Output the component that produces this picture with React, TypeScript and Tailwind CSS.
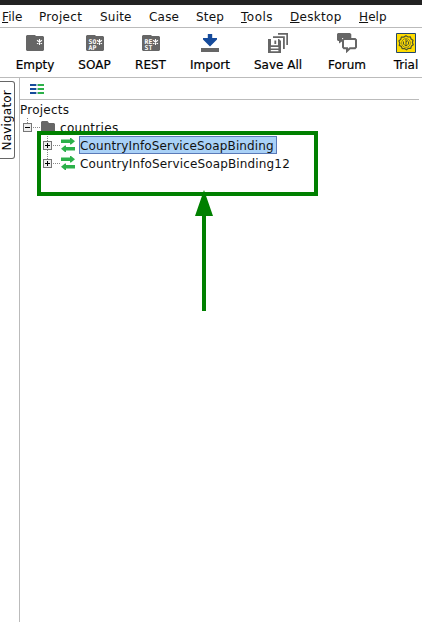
import type { ReactNode } from "react";

const menus = [
  { label: "File", key: true, width: "w-[37px]", space: "tracking-[0.1px]" },
  { label: "Project", key: false, width: "w-[61px]", space: "tracking-[0.3px]" },
  { label: "Suite", key: false, width: "w-[49px]", space: "tracking-[0.2px]" },
  { label: "Case", key: false, width: "w-[47px]", space: "tracking-[0.2px]" },
  { label: "Step", key: false, width: "w-[45px]", space: "tracking-[0.2px]" },
  { label: "Tools", key: true, width: "w-[49px]", space: "tracking-[0.5px]" },
  { label: "Desktop", key: true, width: "w-[69px]", space: "tracking-[0.3px]" },
  { label: "Help", key: true, width: "w-[40px]", space: "tracking-[0.1px]" },
];

function FileIcon({ top, bottom }: { top?: string; bottom?: string }) {
  return (
    <svg width="18" height="16" viewBox="0 0 18 16">
      <path d="M1 0H9L10 1H17L18 2V15L17 16H1L0 15V1Z" fill="#666" />
      <path d="M13.5 4V10M11 5.3L16 8.7M16 5.3L11 8.7" stroke="#fff" strokeWidth="1.1" />
      {top && (
        <text fill="#fff" fontFamily="DejaVu Sans Mono" fontSize="6.5" fontWeight="bold">
          <tspan x="2.5" y="9">{top}</tspan>
          <tspan x="2.5" y="15">{bottom}</tspan>
        </text>
      )}
    </svg>
  );
}

function ImportIcon() {
  return (
    <svg width="18" height="18" viewBox="0 0 18 18">
      <path d="M6.8 0H11.2V4H16V5.5L9 12.5L2 5.5V4H6.8Z" fill="#164b9b" />
      <path d="M0 14H18V18H0Z" fill="#666" />
    </svg>
  );
}

function SaveIcon() {
  return (
    <svg width="20" height="20" viewBox="0 0 20 20" fill="#666">
      <path d="M10 0H20V12H18.3V1.8H10Z" />
      <path d="M5 3.2H16.8V16H15V5H5Z" />
      <path fillRule="evenodd" d="M0 6H3V12.3H10V6H11L13 8V20H0ZM2.8 14V15.4H10.4V14ZM2.8 17V18.3H10.4V17Z" />
      <path d="M6.4 7.5H8.2V11H6.4Z" />
    </svg>
  );
}

function ForumIcon() {
  return (
    <svg width="20" height="20" viewBox="0 0 20 20">
      <path d="M1 0H13L14.3 1.2V5H5V8.5L2 10.5V8H1L0 7V1Z" fill="#666" />
      <path d="M7 6H18L19 7V14.2L18 15.2H13L10 18V15.2H7L6 14.2V7Z" fill="#fff" stroke="#666" strokeWidth="2" />
    </svg>
  );
}

function TrialIcon() {
  return (
    <svg width="20" height="20" viewBox="0 0 20 20" fill="none" stroke="#4a5330">
      <path d="M.5.5H19.5V19.5H.5Z" fill="#ffdc00" stroke="#23466b" />
      <path d="M10 2.8L12 4L14.3 3.8L15.1 6L17 7.2L16.4 9.5L17.2 11.7L15.4 13L14.7 15.3L12.4 15.3L10.5 16.8L8.5 15.5L6.2 15.6L5.3 13.5L3.3 12.4L3.8 10L2.9 7.9L4.7 6.4L5.4 4.1L7.8 4.1Z" strokeWidth="1.2" />
      <circle cx="10" cy="10" r="4.4" strokeWidth="0.6" />
      <path d="M10 6V12.5M7.5 8.5V11L9 12.5H11L12.5 11V8.5M10 9L12 7.5" strokeWidth="1" />
    </svg>
  );
}

const tools: { label: string; width: string; icon: ReactNode; pad: string }[] = [
  { label: "Empty", width: "w-[60px]", icon: <FileIcon />, pad: "pt-[7px]" },
  { label: "SOAP", width: "w-[59px]", icon: <FileIcon top="SO" bottom="AP" />, pad: "pt-[7px]" },
  { label: "REST", width: "w-[53px]", icon: <FileIcon top="RE" bottom="ST" />, pad: "pt-[7px]" },
  { label: "Import", width: "w-[66px]", icon: <ImportIcon />, pad: "pt-[6px]" },
  { label: "Save All", width: "w-[70px]", icon: <SaveIcon />, pad: "pt-[5px]" },
  { label: "Forum", width: "w-[68px]", icon: <ForumIcon />, pad: "pt-[5px]" },
  { label: "Trial", width: "w-[50px]", icon: <TrialIcon />, pad: "pt-[5px]" },
];

function Toggle({ open = false, last = false }: { open?: boolean; last?: boolean }) {
  return (
    <svg width="17" height="18" viewBox="0 0 17 18" className="shrink-0" shapeRendering="crispEdges">
      <path d={last || open ? "M4.5 0V5" : "M4.5 0V18"} stroke="#888" strokeDasharray="1 1" />
      <path d="M10 9.5H17" stroke="#888" strokeDasharray="1 1" />
      <path d="M.5 5.5H8.5V13.5H.5Z" fill="#eee" stroke="#777" />
      <path d={open ? "M2 9.5H7" : "M2 9.5H7M4.5 7V12"} stroke="#000" />
    </svg>
  );
}

function BindingIcon() {
  return (
    <svg width="14" height="14" viewBox="0 0 14 14" fill="#2cb14a" className="ml-[1px] shrink-0">
      <path d="M0 1.5H9V0H10L14 3.2L10 6.6H9V5H0Z" />
      <path d="M14 9H5V7.4H4L0 10.7L4 14H5V12.5H14Z" />
    </svg>
  );
}

export default function App() {
  return (
    <div className="relative flex h-[622px] w-[422px] flex-col overflow-hidden bg-white font-['DejaVu_Sans',sans-serif] text-[12px] text-[#111]">
      <div className="h-[5px] shrink-0 bg-[#222]" />
      <nav className="flex h-[23px] shrink-0 border-b border-[#bbb] pl-[2px] leading-[24px]">
        {menus.map((m) => (
          <span key={m.label} className={`${m.width} ${m.space} shrink-0 whitespace-nowrap`}>
            {m.key ? <span className="underline decoration-1 underline-offset-[1px]">{m.label[0]}</span> : m.label[0]}
            {m.label.slice(1)}
          </span>
        ))}
      </nav>
      <div className="flex h-[50px] shrink-0 overflow-hidden border-b border-[#bbb] pl-[5px] text-black">
        {tools.map((t) => (
          <div key={t.label} className={`${t.width} flex shrink-0 flex-col items-center`}>
            <div className={`h-[28px] ${t.pad}`}>{t.icon}</div>
            <span className="whitespace-nowrap leading-[18px] [-webkit-text-stroke:0.2px_black]">{t.label}</span>
          </div>
        ))}
      </div>
      <div className="flex min-h-0 flex-1">
        <aside className="w-[19px] shrink-0 pt-[3px]">
          <div className="flex h-[78px] w-[15px] items-center justify-center rounded-r-[3px] border border-l-0 border-[#666]">
            <span className="rotate-180 leading-[14px] tracking-[0.2px] text-black [writing-mode:vertical-rl]">Navigator</span>
          </div>
        </aside>
        <main className="flex-1 border-l border-[#bbb]">
          <div className="mr-[3px] flex h-[22px] items-start border-b border-[#bbb] pl-[10px] pt-[6px]">
            <svg width="14" height="10" viewBox="0 0 14 10" shapeRendering="crispEdges">
              <path d="M0 1H6M0 5H6M0 9H6" stroke="#164b9b" strokeWidth="2" />
              <path d="M8 1H14M8 5H14M8 9H14" stroke="#2cb14a" strokeWidth="2" />
              <path d="M6 1H8M6 5H8M6 9H8" stroke="#a3c3cc" strokeWidth="2" />
            </svg>
          </div>
          <div className="h-[18px] leading-[20px] tracking-[0.25px]">Projects</div>
          <div className="flex h-[18px] items-center pl-[3px]">
            <Toggle open />
            <svg width="14" height="14" viewBox="0 0 14 14" className="ml-[1px]">
              <path d="M1 1H6.5L8 3H13L14 4V14H0V2Z" fill="#666" />
            </svg>
            <span className="ml-[5px] pt-[2px] leading-[18px] tracking-[0.3px]">countries</span>
          </div>
          <div className="flex h-[18px] items-center pl-[23px]">
            <Toggle />
            <BindingIcon />
            <span className="ml-[4px] flex h-[18px] w-[198px] items-center whitespace-nowrap border border-[#5a7ab8] bg-[#a9d1f7] pt-[2px] tracking-[0.13px]">CountryInfoServiceSoapBinding</span>
          </div>
          <div className="flex h-[18px] items-center pl-[23px]">
            <Toggle last />
            <BindingIcon />
            <span className="ml-[5px] whitespace-nowrap pt-[2px] tracking-[0.15px]">CountryInfoServiceSoapBinding12</span>
          </div>
        </main>
      </div>
      <div className="absolute left-[37px] top-[131px] h-[65px] w-[281px] border-4 border-[#008000]" />
      <svg className="absolute left-[195px] top-[190px]" width="18" height="121" viewBox="0 0 18 121" fill="#008000">
        <path d="M9 0L18 26H11V121H7V26H0Z" />
      </svg>
    </div>
  );
}
